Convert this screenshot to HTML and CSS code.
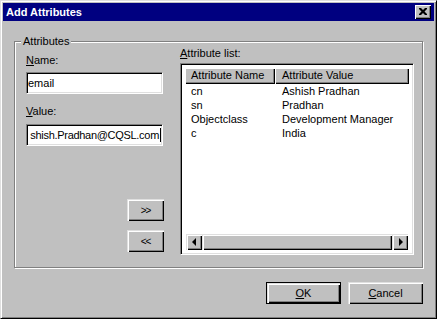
FILE: index.html
```html
<!DOCTYPE html>
<html lang="en">
  <head>
    <meta charset="UTF-8" />
    <title>Add Attributes</title>
    <link rel="stylesheet" href="styles.css">
  </head>
  <body>
    <div class="window">
      <div class="titlebar">
        <span class="title">Add Attributes</span>
        <span class="close-btn">
          <svg width="8" height="7" viewBox="0 0 8 7">
            <path d="M0 0h2l2 2 2-2h2v1l-2.5 2.5 2.5 2.5v1h-2l-2-2-2 2h-2v-1l2.5-2.5-2.5-2.5z" fill="#000" />
          </svg>
        </span>
      </div>

      <div class="dialog-body">
        <div class="group">
          <span class="group-label">Attributes</span>

          <div class="left-col">
            <div class="field-label name-label"><u>N</u>ame:</div>
            <div class="textbox">email</div>
            <div class="field-label value-label"><u>V</u>alue:</div>
            <div class="textbox textbox-end">
              <span class="textbox-text">shish.Pradhan@CQSL.com</span><span class="caret"></span>
            </div>

            <div class="move-buttons">
              <div class="btn move-btn">&gt;&gt;</div>
              <div class="btn move-btn">&lt;&lt;</div>
            </div>
          </div>

          <div class="right-col">
            <div class="field-label list-label"><u>A</u>ttribute list:</div>
            <div class="listview">
              <div class="lv-header">
                <div class="lv-col col-name">Attribute Name</div>
                <div class="lv-col col-value">Attribute Value</div>
              </div>
              <div class="lv-row"><span class="col-name">cn</span><span class="col-value">Ashish Pradhan</span></div>
              <div class="lv-row"><span class="col-name">sn</span><span class="col-value">Pradhan</span></div>
              <div class="lv-row"><span class="col-name">Objectclass</span><span class="col-value">Development Manager</span></div>
              <div class="lv-row"><span class="col-name">c</span><span class="col-value">India</span></div>
              <div class="lv-spacer"></div>
              <div class="hscroll">
                <div class="btn scroll-btn"><span class="arrow-left"></span></div>
                <div class="btn scroll-thumb"></div>
                <div class="btn scroll-btn"><span class="arrow-right"></span></div>
              </div>
            </div>
          </div>
        </div>

        <div class="dialog-buttons">
          <div class="btn dialog-btn btn-default"><u>O</u>K</div>
          <div class="btn dialog-btn"><u>C</u>ancel</div>
        </div>
      </div>
    </div>
  </body>
</html>
```

FILE: styles.css
```css
/* Basis */
body {
  margin: 0;
  font-family: "Liberation Sans", Arial, sans-serif;
  font-size: 11px;
  color: #000;
  background-color: #c0c0c0;
}

/* Vindue */
.window {
  width: 437px;
  height: 319px;
  box-sizing: border-box;
  background-color: #c0c0c0;
  border: 1px solid;
  border-color: #dfdfdf #000 #000 #dfdfdf;
  box-shadow: inset 1px 1px #fff, inset -1px -1px #808080;
  padding: 2px;
  display: flex;
  flex-direction: column;
}

.titlebar {
  height: 18px;
  flex-shrink: 0;
  background-color: #000080;
  color: #fff;
  display: flex;
  align-items: center;
  justify-content: space-between;
  padding: 0 3px 0 3px;
}

.title {
  font-weight: bold;
  font-size: 11px;
}

.close-btn {
  width: 16px;
  height: 14px;
  box-sizing: border-box;
  background-color: #c0c0c0;
  box-shadow: inset 1px 1px #fff, inset -1px -1px #000, inset -2px -2px #808080;
  display: flex;
  align-items: center;
  justify-content: center;
  padding-bottom: 1px;
}

/* Dialog indhold */
.dialog-body {
  padding: 20px 11px 0 11px;
  display: flex;
  flex-direction: column;
}

.group {
  position: relative;
  height: 227px;
  box-sizing: border-box;
  border: 1px solid #808080;
  box-shadow: inset 1px 1px #fff, 1px 1px #fff;
  padding: 5px 8px 12px 11px;
  display: flex;
  gap: 16px;
}

.group-label {
  position: absolute;
  top: -7px;
  left: 6px;
  padding: 0 2px;
  line-height: 13px;
  background-color: #c0c0c0;
}

.left-col {
  width: 138px;
  display: flex;
  flex-direction: column;
}

.right-col {
  width: 234px;
  display: flex;
  flex-direction: column;
}

.field-label {
  line-height: 13px;
}

.name-label {
  margin-top: 7px;
}

.value-label {
  margin-top: 11px;
}

/* Tekstfelter */
.textbox {
  width: 137px;
  height: 22px;
  box-sizing: border-box;
  margin-top: 5px;
  background-color: #fff;
  border: 1px solid;
  border-color: #808080 #fff #fff #808080;
  box-shadow: inset 1px 1px #000, inset -1px -1px #dfdfdf;
  padding: 0 1px;
  line-height: 20px;
  white-space: nowrap;
  overflow: hidden;
}

.textbox-end {
  margin-top: 6px;
  display: flex;
  justify-content: flex-end;
  align-items: center;
}

.textbox-text {
  flex-shrink: 0;
  letter-spacing: -0.3px;
}

.caret {
  flex-shrink: 0;
  width: 1px;
  height: 14px;
  margin-left: 1px;
  background-color: #000;
}

/* Knapper */
.btn {
  box-sizing: border-box;
  background-color: #c0c0c0;
  box-shadow: inset 1px 1px #dfdfdf, inset 2px 2px #fff, inset -1px -1px #000, inset -2px -2px #808080;
  display: flex;
  align-items: center;
  justify-content: center;
}

.move-buttons {
  margin-top: auto;
  margin-bottom: 3px;
  display: flex;
  flex-direction: column;
  align-items: flex-end;
  gap: 9px;
}

.move-btn {
  width: 37px;
  height: 22px;
  font-size: 10px;
  letter-spacing: -1px;
}

.dialog-buttons {
  margin-top: 14px;
  display: flex;
  justify-content: flex-end;
  gap: 7px;
}

.dialog-btn {
  width: 75px;
  height: 22px;
}

.btn-default {
  border: 1px solid #000;
}

/* Liste */
.list-label {
  margin-bottom: 3px;
}

.listview {
  height: 192px;
  box-sizing: border-box;
  background-color: #fff;
  border: 1px solid;
  border-color: #808080 #fff #fff #808080;
  box-shadow: inset 1px 1px #000, inset -1px -1px #dfdfdf;
  padding: 4px;
  display: flex;
  flex-direction: column;
}

.lv-header {
  display: flex;
  height: 16px;
  flex-shrink: 0;
}

.lv-col {
  box-sizing: border-box;
  height: 16px;
  line-height: 15px;
  background-color: #c0c0c0;
  box-shadow: inset 1px 1px #fff, inset -1px -1px #000, inset -2px -2px #808080;
}

.lv-header .col-name {
  width: 90px;
  padding-left: 6px;
}

.lv-header .col-value {
  flex: 1;
  padding-left: 7px;
}

.lv-row {
  display: flex;
  height: 14px;
  line-height: 14px;
}

.lv-row:first-of-type {
  margin-top: 1px;
}

.lv-row .col-name {
  width: 90px;
  padding-left: 6px;
  box-sizing: border-box;
}

.lv-row .col-value {
  padding-left: 7px;
}

.lv-spacer {
  flex: 1;
}

.hscroll {
  display: flex;
  height: 16px;
  margin-left: 1px;
  margin-right: 1px;
}

.scroll-btn {
  width: 16px;
  height: 16px;
}

.scroll-thumb {
  flex: 1;
  height: 16px;
}

.arrow-left {
  width: 0;
  height: 0;
  border-top: 4px solid transparent;
  border-bottom: 4px solid transparent;
  border-right: 4px solid #000;
  margin-right: 1px;
}

.arrow-right {
  width: 0;
  height: 0;
  border-top: 4px solid transparent;
  border-bottom: 4px solid transparent;
  border-left: 4px solid #000;
  margin-left: 1px;
}
```
